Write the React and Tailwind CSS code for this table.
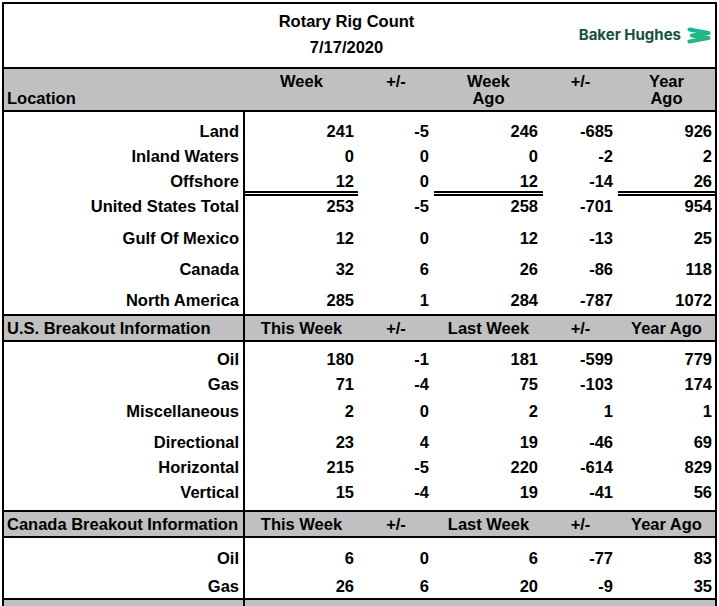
import React from 'react';

const cols = [
  'w-[113px] pr-[4px]',
  'w-[76px] pr-[5px]',
  'w-[109px] pr-[5px]',
  'w-[75px] pr-[5px]',
  'flex-1 pr-[3px]',
];

function Row({ label, vals, h, cell }) {
  return (
    <div className={`flex ${h}`}>
      <div className={`w-[241px] shrink-0 border-r-2 border-black text-right pr-[4px] ${cell}`}>{label}</div>
      {vals.map((v, i) => (
        <div key={i} className={`${cols[i]} shrink-0 text-right ${cell}`}>{v}</div>
      ))}
    </div>
  );
}

function Band({ label, heads }) {
  return (
    <div className="flex h-[28px] border-y-2 border-black bg-[#c0c0c0]">
      <div className="w-[241px] shrink-0 border-r-2 border-black pl-[3px] leading-[24px]">{label}</div>
      {heads.map((t, i) => (
        <div key={i} className={`${cols[i]} shrink-0 text-center leading-[24px] !pr-0`}>{t}</div>
      ))}
    </div>
  );
}

function Logo() {
  return (
    <div className="flex items-center gap-[4px] pt-[21px] pr-[2px]">
      <span className="font-['Inter',sans-serif] font-bold text-[15px] leading-[20px] text-[#16503e]">Baker Hughes</span>
      <svg width="28" height="19" viewBox="0 0 28 19">
        <defs>
          <linearGradient id="bhg" x1="0" y1="0" x2="1" y2="1">
            <stop offset="0" stopColor="#0cb9a4" />
            <stop offset="1" stopColor="#34b46c" />
          </linearGradient>
        </defs>
        <polyline points="4.5,3.5 23.5,7 7,9.5 23.5,12 4.5,15.5" fill="none" stroke="url(#bhg)" strokeWidth="4.2" strokeLinecap="round" strokeLinejoin="round" />
      </svg>
    </div>
  );
}

export default function App() {
  const heads = ['This Week', '+/-', 'Last Week', '+/-', 'Year Ago'];
  return (
    <div className="bg-white w-[719px] h-[606px] overflow-hidden font-['Liberation_Sans',Arial,sans-serif] font-bold text-[16.5px] text-black">
      <div className="ml-[2px] mt-[2px] w-[715px] border-2 border-black">
        {/* Title */}
        <div className="flex items-start h-[63px]">
          <div className="w-[241px] shrink-0" />
          <div className="w-[203px] shrink-0 text-center pt-[4px] leading-[26px]">
            <div>Rotary Rig Count</div>
            <div>7/17/2020</div>
          </div>
          <div className="flex-1 flex items-start justify-end">
            <Logo />
          </div>
        </div>
        {/* Header */}
        <div className="flex h-[45px] border-y-2 border-black bg-[#c0c0c0] leading-[17px]">
          <div className="w-[241px] shrink-0 pl-[3px] pt-[21px]">Location</div>
          <div className="w-[113px] shrink-0 text-center pt-[4px]">Week</div>
          <div className="w-[76px] shrink-0 text-center pt-[4px]">+/-</div>
          <div className="w-[109px] shrink-0 text-center pt-[4px]">Week<br />Ago</div>
          <div className="w-[75px] shrink-0 text-center pt-[4px]">+/-</div>
          <div className="flex-1 text-center pt-[4px]">Year<br />Ago</div>
        </div>
        <Row label="Land" vals={['241', '-5', '246', '-685', '926']} h="h-[32px]" cell="pt-[7px] leading-[25px]" />
        <Row label="Inland Waters" vals={['0', '0', '0', '-2', '2']} h="h-[25px]" cell="leading-[25px]" />
        <Row label="Offshore" vals={['12', '0', '12', '-14', '26']} h="h-[22px]" cell="leading-[25px]" />
        <div className="flex h-[5px]">
          <div className="w-[241px] shrink-0 border-r-2 border-black" />
          <div className="w-[113px] shrink-0 border-y-2 border-black" />
          <div className="w-[76px] shrink-0" />
          <div className="w-[109px] shrink-0 border-y-2 border-black" />
          <div className="w-[75px] shrink-0" />
          <div className="flex-1 border-y-2 border-black" />
        </div>
        <Row label="United States Total" vals={['253', '-5', '258', '-701', '954']} h="h-[24px]" cell="leading-[21px]" />
        <Row label="Gulf Of Mexico" vals={['12', '0', '12', '-13', '25']} h="h-[31px]" cell="pt-[6px] leading-[25px]" />
        <Row label="Canada" vals={['32', '6', '26', '-86', '118']} h="h-[31px]" cell="pt-[6px] leading-[25px]" />
        <Row label="North America" vals={['285', '1', '284', '-787', '1072']} h="h-[32px]" cell="pt-[6px] leading-[25px]" />
        <Band label="U.S. Breakout Information" heads={heads} />
        <Row label="Oil" vals={['180', '-1', '181', '-599', '779']} h="h-[30px]" cell="pt-[5px] leading-[25px]" />
        <Row label="Gas" vals={['71', '-4', '75', '-103', '174']} h="h-[25px]" cell="leading-[25px]" />
        <Row label="Miscellaneous" vals={['2', '0', '2', '1', '1']} h="h-[27px]" cell="pt-[2px] leading-[25px]" />
        <Row label="Directional" vals={['23', '4', '19', '-46', '69']} h="h-[31px]" cell="pt-[6px] leading-[25px]" />
        <Row label="Horizontal" vals={['215', '-5', '220', '-614', '829']} h="h-[25px]" cell="leading-[25px]" />
        <Row label="Vertical" vals={['15', '-4', '19', '-41', '56']} h="h-[30px]" cell="leading-[25px]" />
        <Band label="Canada Breakout Information" heads={heads} />
        <Row label="Oil" vals={['6', '0', '6', '-77', '83']} h="h-[33px]" cell="pt-[8px] leading-[25px]" />
        <Row label="Gas" vals={['26', '6', '20', '-9', '35']} h="h-[27px]" cell="pt-[3px] leading-[25px]" />
        <div className="flex h-[30px] border-t-2 border-black bg-[#c0c0c0]">
          <div className="w-[241px] shrink-0 border-r-2 border-black" />
        </div>
      </div>
    </div>
  );
}
